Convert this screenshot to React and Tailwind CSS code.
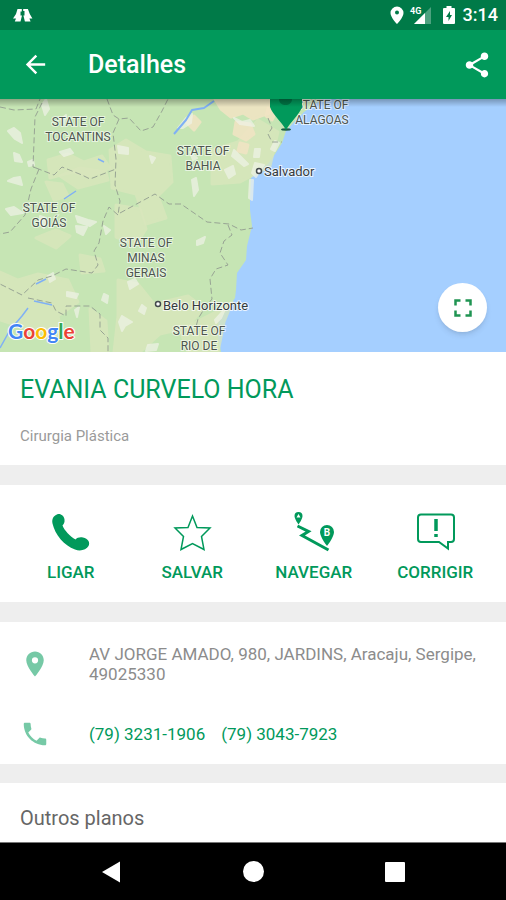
const placeLabels = [
  { lines: ['STATE OF', 'TOCANTINS'], x: 78, y: 126 },
  { lines: ['STATE OF', 'BAHIA'], x: 203, y: 155 },
  { lines: ['STATE OF', 'GOIÁS'], x: 49, y: 212 },
  { lines: ['STATE OF', 'MINAS', 'GERAIS'], x: 146, y: 247 },
  { lines: ['STATE OF', 'RIO DE'], x: 199, y: 335 },
  { lines: ['STATE OF', 'ALAGOAS'], x: 322, y: 109 },
];

const sandPatches = [
  'M215 99h60l-6 14-16 6-10-6-12 4-10-8z',
  'M236 122l14 2 4 10-8 6-12-6z',
  'M186 122l8-6 6 6-6 8z',
  'M240 143l8 2-2 8-8-2z',
  'M268 108l8 4-4 8-6-4z',
];

const palePatches = [
  'M110 150l16-10 20 12 24 4 2 26-14 14 8 22-20 6-10-30-24-6z',
  'M48 160l20-6 16 8 18-6 8 12-20 8-18-4-22 6z',
  'M60 176l20-8 26 4 2 8-30 8z',
  'M0 272l18 8 20-6 30 6 10 22-20 14 4 20-30-6-32-10z',
  'M116 205l24 4 6 20-10 16-20-8z',
  'M118 280l20 4 16 20 34-8 16 12-18 20-26 6-20 18h-26l4-36z',
  'M212 150l26-8 20-22 20 12-8 34-30 16-28 2z',
  'M46 182l16 2 6 12-14 4z',
  'M80 255l20 4 4 12-22 2z',
  'M90 309l16 12 2 31h-16z',
  'M36 238l20-8 14 6-14 12z',
  'M180 330l40-20 12-8-8 20-6 30h-30z',
];

const whitePatches = [
  'M8 131l6-3 6 5 2 10-7-4z',
  'M42 105l4-6 3 10-4 6z',
  'M61 119l5-4-2 9z',
  'M14 153l5 2 3 7-7-1z',
  'M20 177l2 8-14-4 6-3z',
  'M118 146l10 2 0 6-9-1z',
  'M178 128l8-10 6-4-1 9-8 5z',
  'M234 118l8 4 8-2 4 6-14-2z',
  'M192 180l4-2 2 12-4 6z',
  'M225 170l8-4 2 8-6 4z',
  'M234 150l14 14-4 2-12-10z',
  'M255 149l5 0-1 8-5 0z',
  'M275 141l4 2-4 8-4-2z',
  'M250 180l3 0-1 20-3-2z',
  'M255 163l9 2-8 12-4-4z',
  'M6 209l8-2 9 6-12 2z',
  'M76 216l12 4 8 2-6 4-12-4z',
  'M40 216l6 2-2 10-4-4z',
  'M76 226l11 1-4 8-6-3z',
  'M197 241l8-4-2 6-6 2z',
  'M104 226l6 4-4 4z',
  'M48 276l5-3 2 6-5 3z',
  'M128 282l7-3 3 5-8 5z',
  'M104 294l4 2-1 7-5-3z',
  'M119 322l3-6 10 6-7 4-3 5z',
  'M75 310l4-3-2 10z',
  'M142 305l4 3-2 6-5-3z',
  'M148 345l10-1-2 6-10 1z',
  'M28 162l5-2 1 5-5 1z',
  'M150 156l5 2-3 5z',
  'M215 320l10-11-4 9-5 5z',
  'M190 152l7 6-4 2z',
  'M60 152l10-3 3 4-9 3z',
  'M67 292l11 2-2 4-9-2z',
];

const borders = [
  'M0 107l14 3 22-1 4-10',
  'M42 103l-7 14-2 50 6 2-8 20-6 26-15 17-10 2',
  'M36 168l18 7 8-8 20 8 8 4 26-10',
  'M107 99l6 16 6 4 10-1 12 13 12-4 9-16 6-12',
  'M119 119l-6 14 3 26-1 26 5 16-2 14',
  'M120 213l35-19 14 10 12 0 26 18 22 2 12 6 12-2',
  'M118 215l-9-8-6 14-4 22-5 8 4 14-6 8-26-4-14 7-14 4-16 15-28-14',
  'M28 298l24 5 4 8 10 5 0-10 24 0 10 8 0 16 8 8 0 14',
  'M228 225l4 10-8 6-4 12 8 12-12 4-6 10 2 20-8 10-6 10-2 8',
  'M268 118l4 10-4 6 4 8 10 0',
];

function CoastMap() {
  return (
    <svg
      className="absolute inset-0 h-full w-full"
      viewBox="0 99 506 253"
      preserveAspectRatio="xMinYMin slice"
      role="img"
      aria-label="Mapa"
    >
      <defs>
        <linearGradient id="bar-shade" x1="0" y1="0" x2="0" y2="1">
          <stop offset="0" stopColor="#000" stopOpacity="0.28" />
          <stop offset="1" stopColor="#000" stopOpacity="0" />
        </linearGradient>
      </defs>
      <rect x="0" y="99" width="2000" height="253" fill="#a5cfff" />
      <path
        d="M0 99H322L304 112L295 121L286 131L282 143L275 154L268 164L256 171L251 178L250 200L250 210L252 226L247 246L246 260L237 273L236 290L235 298L226 311L219 320L217 332L221 352H0Z"
        fill="#c6e5b4"
      />
      <g strokeWidth="3" strokeLinejoin="round">
        <g fill="#dae7bd" stroke="#dae7bd">{palePatches.map((d) => <path key={d} d={d} opacity="0.75" />)}</g>
        <g fill="#f2e4c4" stroke="#f2e4c4">{sandPatches.map((d) => <path key={d} d={d} opacity="0.85" />)}</g>
        <g fill="#f0f3e8" stroke="#f0f3e8" strokeWidth="2">{whitePatches.map((d) => <path key={d} d={d} opacity="0.7" />)}</g>
      </g>
      <g fill="none" stroke="#7fb0f5" strokeLinejoin="round">
        <path d="M214 101l-10 7-12 2-6 10-12 14" strokeWidth="2" />
        <path d="M0 348l10-18 12-14 6-8M36 284l10-5M34 301l18 4M64 199l12-8M98 159l6 3" strokeWidth="1.5" />
      </g>
      <g fill="none" stroke="#98a494" strokeWidth="1" strokeDasharray="6 3">
        {borders.map((d) => <path key={d} d={d} />)}
      </g>

      <g
        fontFamily="Roboto, sans-serif"
        fontSize="12"
        textAnchor="middle"
        fill="#4c554e"
        stroke="#ffffff"
        strokeOpacity="0.6"
        strokeWidth="2"
        paintOrder="stroke"
      >
        {placeLabels.map((label) =>
          label.lines.map((line, i) => (
            <text key={label.x + line} x={label.x} y={label.y + i * 15}>
              {line}
            </text>
          )),
        )}
      </g>
      <g
        fontFamily="Roboto, sans-serif"
        fontSize="13"
        fill="#353b3d"
        stroke="#ffffff"
        strokeOpacity="0.75"
        strokeWidth="2"
        paintOrder="stroke"
      >
        <text x="264" y="176">Salvador</text>
        <text x="163" y="310">Belo Horizonte</text>
      </g>
      <g fill="#fff" stroke="#454b4d" strokeWidth="1.5">
        <circle cx="259" cy="171" r="2.5" />
        <circle cx="158" cy="304" r="2.5" />
      </g>
      <ellipse cx="286" cy="129.5" rx="5" ry="1.2" fill="#1b5b45" />
      <path d="M270 99H302V107C299 115 291 121 286 130C281 121 273 115 270 107Z" fill="#01995b" />
      <path d="M279 99H292C292 107 279 107 279 99Z" fill="#007545" />

      <text x="8" y="339" fontFamily="Lato, sans-serif" fontSize="21" fontWeight="700" stroke="#fff" strokeWidth="2" paintOrder="stroke">
        <tspan fill="#4285f4">G</tspan>
        <tspan fill="#ea4335">o</tspan>
        <tspan fill="#fbbc05">o</tspan>
        <tspan fill="#4285f4">g</tspan>
        <tspan fill="#34a853">l</tspan>
        <tspan fill="#ea4335">e</tspan>
      </text>
      <rect x="0" y="99" width="2000" height="8" fill="url(#bar-shade)" />
    </svg>
  );
}

function StatusBar() {
  return (
    <div className="flex h-[30px] items-center justify-between bg-[#007a48] px-2 text-white">
      <svg className="ml-1 h-5 w-6" viewBox="0 0 24 20" fill="#fff" aria-hidden="true">
        <path d="M5.500 4H9.800V6.500H8.500V10.500H10L8.500 16.500H2.800L4 13.500H1L4 9Z" />
        <path d="M15.900 4H11.200V6H12.500V10.500H11.400L12.900 16.500H18.600L17.400 13.500H20.400L17.800 9Z" />
      </svg>
      <div className="flex items-center">
        <svg className="h-5 w-4" viewBox="0 0 16 20" fill="#fff" aria-hidden="true">
          <path fillRule="evenodd" d="M8 1.500a6.500 6.500 0 0 0-6.500 6.500c0 4.500 6.500 11 6.500 11s6.500-6.500 6.500-11a6.500 6.500 0 0 0-6.500-6.500zm0 4a2 2 0 1 1 0 4 2 2 0 0 1 0-4z" />
        </svg>
        <svg className="ml-1 h-6 w-6" viewBox="0 0 24 24" aria-hidden="true">
          <path d="M22 4v17H5z" fill="#fff" opacity="0.3" />
          <path d="M16 10v11H5z" fill="#fff" />
          <text x="1" y="11" fontFamily="Roboto, sans-serif" fontSize="9" fontWeight="700" fill="#fff">4G</text>
        </svg>
        <svg className="ml-2 h-5 w-4" viewBox="0 0 16 20" fill="#fff" aria-hidden="true">
          <path fillRule="evenodd" d="M5.500 1h5v2H13q1 0 1 1v14q0 1-1 1H3q-1 0-1-1V4q0-1 1-1h2.500zM9 6l-4 6h2.500v4L11 10H9z" />
        </svg>
        <span className="ml-1.5 text-lg leading-5 font-medium">3:14</span>
      </div>
    </div>
  );
}

function PhoneIcon() {
  return (
    <svg className="h-10 w-10" viewBox="0 0 40 40" aria-hidden="true">
      <path
        d="M6 2.500C9 1 13 3.500 13.500 7.500C14 10.500 12.500 12.500 11.500 13.500C13.500 18.500 19 24.500 24.500 27.500C26 25.500 29 25 32 25.500C37 26.500 39.500 30.500 37.500 34C35.500 38 29 39.500 24 37.500C13 33.500 4 22.500 1.500 11.500C.5 6.500 3 3.500 6 2.500Z"
        fill="#01995b"
      />
    </svg>
  );
}

function StarIcon() {
  return (
    <svg className="h-10 w-10" viewBox="0 0 40 40" aria-hidden="true">
      <path
        d="M20.500 4L25 15.500L38 16L29.500 24.500L32 37.500L20.500 31.500L9 37.500L11.500 24.500L3 16L16 15.500Z"
        fill="none"
        stroke="#01995b"
        strokeWidth="1.500"
      />
    </svg>
  );
}

function RouteIcon() {
  return (
    <svg className="h-10 w-10" viewBox="0 0 40 40" fill="#01995b" aria-hidden="true">
      <path fillRule="evenodd" d="M4.500 0a4 4 0 0 0-4 4c0 3 4 8.500 4 8.500s4-5.500 4-8.500a4 4 0 0 0-4-4zm0 2l2 3.500h-4z" />
      <path d="M3.500 14L14.500 19.500L8 23.500L34.500 38" fill="none" stroke="#01995b" strokeWidth="3" />
      <path d="M33 13a7 7 0 0 0-7 7c0 5 7 14 7 14s7-9 7-14a7 7 0 0 0-7-7z" />
      <text x="33" y="24" textAnchor="middle" fontFamily="Roboto, sans-serif" fontSize="10" fontWeight="700" fill="#fff">B</text>
    </svg>
  );
}

function ReportIcon() {
  return (
    <svg className="h-10 w-10" viewBox="0 0 40 40" fill="none" stroke="#01995b" strokeWidth="2" aria-hidden="true">
      <path d="M6 2.500H36Q39 2.500 39 5.500V27Q39 30 36 30H33V36.500L24 30H6Q3 30 3 27V5.500Q3 2.500 6 2.500Z" />
      <path d="M21 7V19M21 22V25" strokeWidth="3.500" />
    </svg>
  );
}

const actions = [
  { label: 'LIGAR', Icon: PhoneIcon },
  { label: 'SALVAR', Icon: StarIcon },
  { label: 'NAVEGAR', Icon: RouteIcon },
  { label: 'CORRIGIR', Icon: ReportIcon },
];

export default function App() {
  return (
    <div className="flex min-h-screen flex-col bg-[#eeeeee] font-['Roboto',sans-serif]">
      <StatusBar />

      <header className="relative z-10 flex h-[69px] items-center bg-[#01995b] px-[15px] text-white">
        <button type="button" aria-label="Voltar" className="flex h-10 w-10 items-center justify-center">
          <svg className="h-[29px] w-[29px]" viewBox="0 0 24 24" fill="#fff" aria-hidden="true">
            <path d="M20 11H7.830l5.590-5.590L12 4l-8 8 8 8 1.410-1.410L7.830 13H20v-2z" />
          </svg>
        </button>
        <h1 className="ml-[33px] flex-1 text-[25px] font-medium">Detalhes</h1>
        <button type="button" aria-label="Compartilhar" className="-mr-1.5 flex h-10 w-10 items-center justify-center">
          <svg className="h-[30px] w-[30px]" viewBox="0 0 24 24" fill="#fff" aria-hidden="true">
            <path d="M18 16.080c-.76 0-1.440.3-1.960.77L8.910 12.700c.05-.23.090-.46.090-.7s-.04-.47-.09-.7l7.050-4.110c.54.5 1.250.81 2.040.81 1.660 0 3-1.340 3-3s-1.340-3-3-3-3 1.340-3 3c0 .24.040.47.090.7L8.040 9.810C7.500 9.310 6.790 9 6 9c-1.660 0-3 1.340-3 3s1.340 3 3 3c.79 0 1.500-.31 2.040-.81l7.120 4.160c-.05.21-.08.43-.08.65 0 1.610 1.310 2.920 2.920 2.920s2.920-1.310 2.920-2.920-1.310-2.920-2.920-2.920z" />
          </svg>
        </button>
      </header>

      <section className="relative h-[253px] overflow-hidden">
        <CoastMap />
        <button
          type="button"
          aria-label="Tela cheia"
          className="absolute right-[19px] bottom-5 flex h-[49px] w-[49px] items-center justify-center rounded-full bg-white shadow-md"
        >
          <svg className="h-[30px] w-[30px]" viewBox="0 0 24 24" fill="#1f9452" aria-hidden="true">
            <path d="M7 14H5v5h5v-2H7v-3zm-2-4h2V7h3V5H5v5zm12 7h-3v2h5v-5h-2v3zM14 5v2h3v3h2V5h-5z" />
          </svg>
        </button>
      </section>

      <section className="bg-white px-5 pt-5 pb-[19px]">
        <h2 className="text-[25px] leading-9 text-[#01995b]">EVANIA CURVELO HORA</h2>
        <p className="mt-[18px] text-[15px] leading-5 text-[#9a9a9a]">Cirurgia Plástica</p>
      </section>

      <section className="mt-5 grid grid-cols-4 bg-white px-[10px] pt-[27px] pb-[18px]">
        {actions.map(({ label, Icon }) => (
          <button key={label} type="button" className="flex flex-col items-center gap-2 text-[17px] leading-6 font-medium text-[#01995b]">
            <Icon />
            {label}
          </button>
        ))}
      </section>

      <section className="mt-5 bg-white px-5 pt-[22px] pb-4">
        <div className="flex items-center">
          <svg className="h-[30px] w-[30px] shrink-0" viewBox="0 0 24 24" fill="#76c9a6" aria-hidden="true">
            <path d="M12 2C8.130 2 5 5.130 5 9c0 5.250 7 13 7 13s7-7.750 7-13c0-3.870-3.130-7-7-7zm0 9.500a2.500 2.500 0 1 1 0-5 2.500 2.500 0 0 1 0 5z" />
          </svg>
          <p className="ml-[39px] text-[17px] leading-5 text-[#8c8c8c]">
            AV JORGE AMADO, 980, JARDINS, Aracaju, Sergipe, 49025330
          </p>
        </div>
        <div className="mt-9 flex h-7 items-center">
          <svg className="h-[30px] w-[30px] shrink-0" viewBox="0 0 24 24" fill="#76c9a6" aria-hidden="true">
            <path d="M6.620 10.790c1.440 2.830 3.760 5.140 6.590 6.590l2.200-2.200c.27-.27.67-.36 1.020-.24 1.120.37 2.330.57 3.570.57.55 0 1 .45 1 1V20c0 .55-.45 1-1 1-9.390 0-17-7.610-17-17 0-.55.45-1 1-1h3.500c.55 0 1 .45 1 1 0 1.250.2 2.450.57 3.570.11.35.03.74-.25 1.020l-2.200 2.200z" />
          </svg>
          <div className="ml-[39px] flex gap-4 text-[17px] leading-5 text-[#01995b]">
            <a href="tel:7932311906">(79) 3231-1906</a>
            <a href="tel:7930437923">(79) 3043-7923</a>
          </div>
        </div>
      </section>

      <section className="mt-[19px] flex-1 bg-white px-5 pt-5 pb-2">
        <h3 className="text-xl leading-[30px] text-[#666666]">Outros planos</h3>
      </section>

      <nav className="flex h-[58px] items-center justify-center gap-[112px] border-t border-[#777777] bg-black">
        <button type="button" aria-label="Voltar" className="flex h-[30px] w-[30px] items-center justify-center">
          <svg className="h-6 w-6" viewBox="0 0 24 24" fill="#fff" aria-hidden="true">
            <path d="M21 1.500V22.500L3 12Z" />
          </svg>
        </button>
        <button type="button" aria-label="Início" className="flex h-[30px] w-[30px] items-center justify-center">
          <span className="h-[21px] w-[21px] rounded-full bg-white" />
        </button>
        <button type="button" aria-label="Recentes" className="flex h-[30px] w-[30px] items-center justify-center">
          <span className="h-5 w-5 rounded-[1px] bg-white" />
        </button>
      </nav>
    </div>
  );
}
